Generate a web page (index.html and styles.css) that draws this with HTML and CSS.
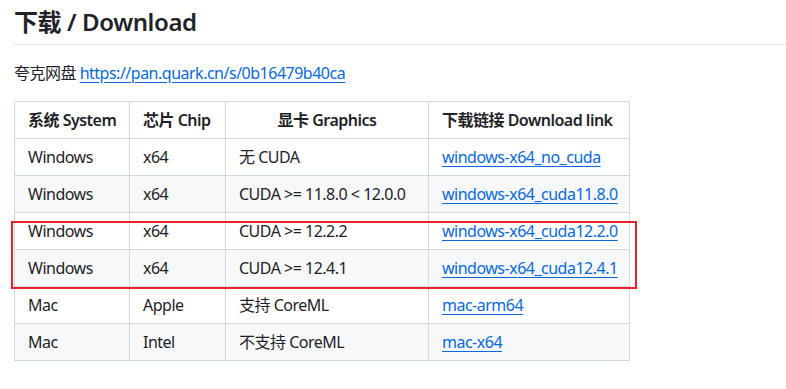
FILE: index.html
```html
<!DOCTYPE html>
<html lang="zh-CN">
<head>
<meta charset="utf-8">
<title>下载 / Download</title>
<link rel="stylesheet" href="styles.css">
</head>
<body>
<div class="markdown">
  <h2 class="title">下载 / Download</h2>
  <p class="source">夸克网盘 <a href="#">https://pan.quark.cn/s/0b16479b40ca</a></p>
  <div class="table-wrap">
    <table class="dl">
      <colgroup>
        <col class="w-sys">
        <col class="w-chip">
        <col class="w-gpu">
        <col class="w-link">
      </colgroup>
      <thead>
        <tr><th>系统 System</th><th>芯片 Chip</th><th class="center">显卡 Graphics</th><th>下载链接 Download link</th></tr>
      </thead>
      <tbody>
        <tr><td>Windows</td><td>x64</td><td>无 CUDA</td><td><a href="#">windows-x64_no_cuda</a></td></tr>
        <tr><td>Windows</td><td>x64</td><td>CUDA &gt;= 11.8.0 &lt; 12.0.0</td><td><a href="#">windows-x64_cuda11.8.0</a></td></tr>
        <tr><td>Windows</td><td>x64</td><td>CUDA &gt;= 12.2.2</td><td><a href="#">windows-x64_cuda12.2.0</a></td></tr>
        <tr><td>Windows</td><td>x64</td><td>CUDA &gt;= 12.4.1</td><td><a href="#">windows-x64_cuda12.4.1</a></td></tr>
        <tr><td>Mac</td><td>Apple</td><td>支持 CoreML</td><td><a href="#">mac-arm64</a></td></tr>
        <tr><td>Mac</td><td>Intel</td><td>不支持 CoreML</td><td><a href="#">mac-x64</a></td></tr>
      </tbody>
    </table>
    <div class="highlight"></div>
  </div>
</div>
</body>
</html>
```
FILE: styles.css
```css
html, body {
  margin: 0;
  padding: 0;
  background: #ffffff;
}

.markdown {
  padding: 7px 0 0 14px;
  font-family: "Noto Sans", "Noto Sans CJK SC", sans-serif;
  font-size: 16px;
  line-height: 24px;
  color: #1f2328;
  letter-spacing: -0.5px;
}

.title {
  margin: 0 0 16px 0;
  padding-bottom: 7px;
  font-size: 24px;
  line-height: 30px;
  font-weight: 600;
  letter-spacing: -0.4px;
  border-bottom: 1px solid #e1e6ea;
}

.source {
  margin: 0 0 16px 0;
}

a {
  color: #0969da;
  text-decoration: underline;
  text-underline-offset: 3px;
}

.table-wrap {
  position: relative;
  width: max-content;
}

.dl {
  border-collapse: collapse;
  table-layout: fixed;
  width: 616px;
  white-space: nowrap;
}

.w-sys { width: 115px; }
.w-chip { width: 96px; }
.w-gpu { width: 203px; }
.w-link { width: 201px; }

.dl th,
.dl td {
  padding: 6px 13px;
  border: 1px solid #d1d9e0;
  text-align: left;
}

.dl th {
  font-weight: 600;
}

.dl th.center {
  text-align: center;
}

.dl tbody tr:nth-child(2n) {
  background: #f6f8fa;
}

.highlight {
  position: absolute;
  left: -3px;
  top: 120px;
  width: 622px;
  height: 64px;
  border: 2px solid #e8222a;
  pointer-events: none;
}
```
